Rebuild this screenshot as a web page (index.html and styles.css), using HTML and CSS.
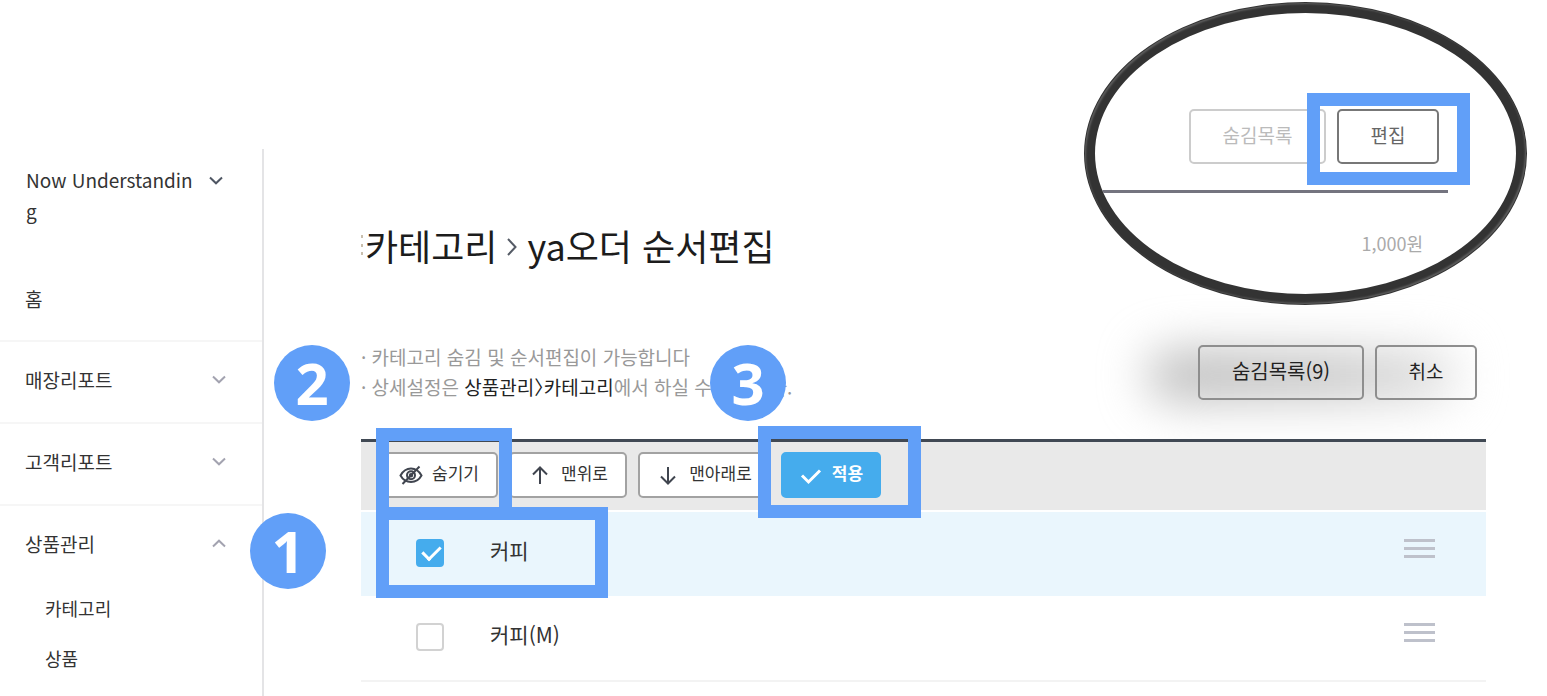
FILE: index.html
```html
<!DOCTYPE html>
<html lang="ko">
<head>
<meta charset="utf-8">
<title>카테고리 - ya오더 순서편집</title>
<link rel="stylesheet" href="styles.css">
</head>
<body>
<div class="page">
  <nav class="sidebar">
    <button class="store" type="button">
      <span class="store-name">Now Understandin<br>g</span>
      <svg class="chevron chevron-dark" viewBox="0 0 14 9"><path d="M1 1.5 7 7.3 13 1.5"/></svg>
    </button>
    <a class="menu menu-home" href="#">홈</a>
    <button class="menu" type="button">매장리포트<svg class="chevron" viewBox="0 0 14 9"><path d="M1 1.5 7 7.3 13 1.5"/></svg></button>
    <button class="menu" type="button">고객리포트<svg class="chevron" viewBox="0 0 14 9"><path d="M1 1.5 7 7.3 13 1.5"/></svg></button>
    <button class="menu" type="button" aria-expanded="true">상품관리<svg class="chevron" viewBox="0 0 14 9"><path d="M1 7.5 7 1.7 13 7.5"/></svg></button>
    <div class="submenu">
      <a href="#">카테고리</a>
      <a href="#">상품</a>
    </div>
  </nav>

  <main class="main">
    <h1 class="title">
      <svg class="title-edge" viewBox="0 0 2 24"><path d="M1 2v3M1 11v3M1 19v3"/></svg>
      <span>카테고리</span>
      <svg class="crumb" viewBox="0 0 10 18"><path d="M1 1 8.5 9 1 17"/></svg>
      <span>ya오더 순서편집</span>
    </h1>

    <div class="head">
      <div class="notes">
        <p>· 카테고리 숨김 및 순서편집이 가능합니다</p>
        <p>· 상세설정은 <strong>상품관리〉카테고리</strong>에서 하실 수 있습니다.</p>
      </div>
      <div class="actions">
        <button class="btn btn-wide" type="button">숨김목록(9)</button>
        <button class="btn" type="button">취소</button>
      </div>
    </div>

    <section class="panel">
      <div class="toolbar">
        <button class="tool" type="button">
          <svg class="tool-icon" viewBox="0 0 24 20"><path d="M1.500 10.500C4 6 8 3.500 12 3.500s8 2.500 10.500 7C20 15 16 17 12 17S4 15 1.500 10.500Z"/><circle cx="12" cy="10.200" r="4"/><circle cx="12" cy="10.200" r="1.200"/><path d="M3.500 19 20.500 1.500"/></svg>
          <span>숨기기</span>
        </button>
        <button class="tool" type="button">
          <svg class="tool-icon" viewBox="0 0 24 20"><path d="M12 19V2.500M5 9.500l7-7 7 7"/></svg>
          <span>맨위로</span>
        </button>
        <button class="tool tool-long" type="button">
          <svg class="tool-icon" viewBox="0 0 24 20"><path d="M12 2v16.500M5 11.500l7 7 7-7"/></svg>
          <span>맨아래로</span>
        </button>
        <button class="tool tool-apply" type="button">
          <svg class="tool-icon" viewBox="0 0 24 20"><path d="M3 10.500l6.500 6.500L21 5.500"/></svg>
          <span>적용</span>
        </button>
      </div>
      <table class="rows">
        <tr class="row-on">
          <td class="cell-check"><input class="check" id="c1" type="checkbox" checked></td>
          <td><label for="c1">커피</label></td>
          <td class="cell-drag"><button class="drag" type="button" aria-label="이동"><i></i><i></i><i></i></button></td>
        </tr>
        <tr>
          <td class="cell-check"><input class="check" id="c2" type="checkbox"></td>
          <td><label for="c2">커피(M)</label></td>
          <td class="cell-drag"><button class="drag" type="button" aria-label="이동"><i></i><i></i><i></i></button></td>
        </tr>
      </table>
      <div class="frame frame-hide"></div>
      <div class="frame frame-row"></div>
      <div class="frame frame-apply"></div>
      <span class="step step-1">1</span>
      <span class="step step-2">2</span>
      <span class="step step-3">3</span>
    </section>
  </main>

  <aside class="lens">
    <div class="lens-view">
      <div class="lens-actions">
        <button class="btn btn-muted" type="button">숨김목록</button>
        <button class="btn btn-edit" type="button">편집</button>
      </div>
      <p class="price">1,000원</p>
    </div>
    <div class="frame frame-edit"></div>
  </aside>
</div>
</body>
</html>
```

FILE: styles.css
```css
* { box-sizing: border-box; }

body {
  margin: 0;
  background: #fff;
  color: #333;
  font-family: "Noto Sans CJK KR", sans-serif;
  font-size: 19px;
}

button {
  font: inherit;
  color: inherit;
  background: none;
  border: 0;
  padding: 0;
}

a { color: inherit; text-decoration: none; }
p, h1 { margin: 0; font-weight: 400; }
svg { fill: none; stroke: currentColor; flex: none; }

.page {
  position: relative;
  display: flex;
  min-height: 100vh;
  padding-top: 149px;
}

/* Sidebar */
.sidebar {
  flex: none;
  width: 264px;
  border-right: 2px solid #e4e4e6;
}

.store {
  display: flex;
  align-items: flex-start;
  justify-content: space-between;
  width: 100%;
  padding: 15px 39px 0 26px;
  line-height: 31px;
  text-align: left;
}

.chevron { width: 14px; height: 9px; color: #a3a3b0; stroke-width: 2; }
.chevron-dark { margin-top: 12px; color: #4f5663; }

.menu {
  display: flex;
  align-items: center;
  justify-content: space-between;
  width: 100%;
  height: 82px;
  padding: 0 36px 6px 25px;
  border-top: 2px solid #f6f6f6;
}

.menu-home { height: 114px; padding-top: 36px; border: 0; }

.submenu {
  display: flex;
  flex-direction: column;
  margin-top: -3px;
  padding-left: 45px;
  font-size: 18px;
  line-height: 50px;
}

/* Main column */
.main {
  flex: 1;
  min-width: 0;
  padding: 72px 61px 0 97px;
}

.title {
  display: flex;
  align-items: center;
  gap: 10px;
  font-size: 36px;
  line-height: 48px;
  color: #1c1c1c;
}

.title-edge { width: 2px; height: 24px; margin-right: -8px; stroke-width: 2; color: #c9bfae; }
.crumb { width: 10px; height: 18px; margin-top: 4px; stroke-width: 2; color: #555b66; }

.head {
  display: flex;
  align-items: center;
  justify-content: space-between;
  padding: 73px 9px 37px 0;
}

.notes { line-height: 30px; color: #999; }
.notes strong { font-weight: 400; color: #222; font-feature-settings: "halt"; }

.actions { position: relative; z-index: 0; display: flex; gap: 11px; }

.actions::before {
  content: "";
  position: absolute;
  z-index: -1;
  inset: 6px 20px 0 -50px;
  border-radius: 50px;
  background: linear-gradient(90deg, #b8b8b8 0%, #c6c6c6 60%, #e2e2e2 100%);
  filter: blur(24px);
}

.btn {
  height: 55px;
  min-width: 102px;
  padding-bottom: 4px;
  border: 2px solid #8e8e8e;
  border-radius: 5px;
  color: #222;
}

.btn-wide { min-width: 166px; font-size: 20px; }

/* Category list */
.panel { position: relative; border-top: 3px solid #414954; }

.toolbar {
  display: flex;
  align-items: center;
  gap: 11px;
  height: 68px;
  padding: 0 0 2px 19px;
  background: #e9e9e9;
}

.tool {
  display: flex;
  align-items: center;
  justify-content: center;
  gap: 9px;
  width: 118px;
  height: 46px;
  border: 2px solid #a2a2a2;
  border-radius: 5px;
  background: #fff;
  font-size: 17px;
}

.tool span { padding-bottom: 6px; }
.tool-icon { width: 24px; height: 20px; stroke-width: 2; color: #40454f; }
.tool-long { width: 132px; }

.tool-apply {
  width: 100px;
  border-color: #45aced;
  background: #45aced;
  color: #fff;
  font-weight: 700;
}

.tool-apply .tool-icon { color: #fff; stroke-width: 3; }

.rows { width: 100%; border-collapse: collapse; font-size: 21px; }
.rows tr { height: 85px; border-bottom: 2px solid #f3f3f3; }
.rows .row-on { border-top: 2px solid #fff; border-bottom: 0; background: #eaf6fd; }
.rows td { padding: 0 0 8px; }
.rows .cell-check { width: 129px; padding: 0 0 2px 55px; }
.rows .cell-drag { width: 82px; padding-bottom: 11px; }

.check {
  appearance: none;
  display: block;
  width: 28px;
  height: 28px;
  margin: 0;
  border: 2px solid #d2d2d2;
  border-radius: 4px;
  background: #fff;
}

.check:checked { border-color: #45aced; background: #45aced; }

.check:checked::after {
  content: "";
  display: block;
  width: 8px;
  height: 15px;
  margin: 1px 0 0 8px;
  border: solid #fff;
  border-width: 0 3px 3px 0;
  transform: rotate(45deg);
}

.drag { display: flex; flex-direction: column; gap: 5px; width: 31px; }
.drag i { height: 3px; background: #bec1cb; }

/* Guide markers */
.frame { position: absolute; border: 13px solid #619ff8; }
.frame-hide { left: 15px; top: -14px; width: 136px; height: 92px; }
.frame-row { left: 15px; top: 65px; width: 232px; height: 91px; }
.frame-apply { left: 397px; top: -16px; width: 163px; height: 92px; }

.step {
  position: absolute;
  width: 76px;
  height: 76px;
  border-radius: 50%;
  background: #619ff8;
  color: #fff;
  font: 700 58px/76px "Open Sans", sans-serif;
  text-align: center;
}

.step-1 { left: -111px; top: 71px; }
.step-2 { left: -87px; top: -97px; }
.step-3 { left: 349px; top: -97px; }

/* Magnified view */
.lens { position: absolute; top: 2px; right: 20px; width: 443px; height: 303px; }

.lens-view {
  height: 100%;
  overflow: hidden;
  border: 11px solid #333;
  border-radius: 50%;
  background: #fff;
}

.lens::after {
  content: "";
  position: absolute;
  inset: 1px;
  border-radius: 50%;
  box-shadow: inset 2px 2px 2px -1px #606060, inset -2px -2px 2px -1px #606060;
  pointer-events: none;
}

.lens-actions {
  display: flex;
  justify-content: flex-end;
  gap: 11px;
  margin-right: 68px;
  padding: 96px 9px 26px 0;
  border-bottom: 3px solid #74747f;
}

.btn-muted { width: 137px; border-color: #ccc; color: #bbb; }
.btn-edit { border-color: #777; color: #666; }
.price { padding: 36px 93px 0 0; text-align: right; font-size: 18px; line-height: 28px; color: #aaa; }
.frame-edit { left: 223px; top: 91px; width: 163px; height: 92px; }
```
